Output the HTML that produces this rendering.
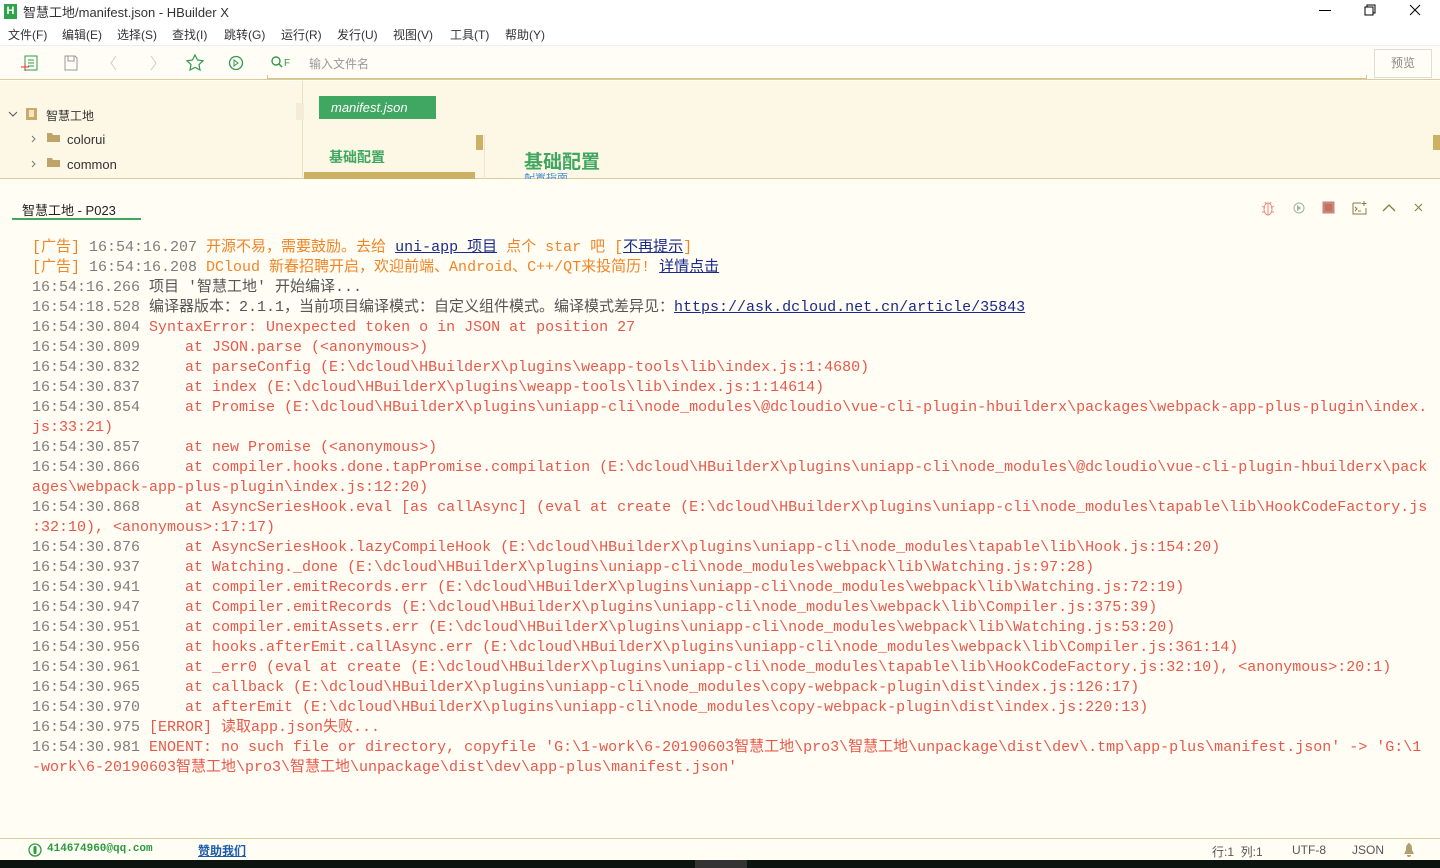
<!DOCTYPE html>
<html><head><meta charset="utf-8">
<style>
*{margin:0;padding:0;box-sizing:border-box}
body{width:1440px;height:868px;overflow:hidden;background:#fffdf4;font-family:"Liberation Sans","Noto Sans CJK SC",sans-serif;position:relative;color:#333}
.abs{position:absolute}
.title{top:0;left:0;width:1440px;height:24px;background:#fff;font-size:13px}
.menu{top:24px;left:0;width:1440px;height:22px;background:#fff;font-size:12px;border-bottom:1px solid #eee}
.menu span{position:absolute;top:2px}
.tool{top:46px;left:0;width:1440px;height:34px;background:#fffdf5;border-bottom:1px solid #dccb9a}
.panel{top:81px;left:0;width:1440px;height:98px;background:#fdf8e6;border-bottom:1px solid #d8cca0}
pre{font-family:"Liberation Mono","Noto Sans CJK SC",monospace;font-size:15px;line-height:20px;position:absolute;left:32px;top:238px;color:#e8584a;white-space:pre}
.t{color:#7d7d7d}.o{color:#f08528}.g{color:#555}.u{color:#1a2a8a;text-decoration:underline}
.status{top:838px;left:0;width:1440px;height:22px;border-top:1px solid #d8cca0;background:#fffdf4;font-size:12px}
.task{top:860px;left:0;width:1440px;height:8px;background:#0c1410}
</style></head><body>
<div class="abs title">
 <div class="abs" style="left:4px;top:4px;width:13px;height:15px;background:#2fa24a;color:#fff;font-size:11px;text-align:center;line-height:15px;font-weight:bold">H</div>
 <div class="abs" style="left:23px;top:2px">智慧工地/manifest.json - HBuilder X</div>
 <svg class="abs" style="left:1310px;top:0" width="130" height="24"><path d="M9 10.5h12" stroke="#000"/><path d="M55 7h8v8h-8z M57 7v-2h8v8h-2" fill="none" stroke="#000"/><path d="M100 5l10 10M110 5l-10 10" stroke="#000"/></svg>
</div>
<div class="abs menu">
 <span style="left:8px">文件(F)</span><span style="left:62px">编辑(E)</span><span style="left:117px">选择(S)</span><span style="left:172px">查找(I)</span><span style="left:224px">跳转(G)</span><span style="left:281px">运行(R)</span><span style="left:337px">发行(U)</span><span style="left:393px">视图(V)</span><span style="left:450px">工具(T)</span><span style="left:505px">帮助(Y)</span>
</div>
<div class="abs tool">
 <svg class="abs" style="left:0;top:0" width="300" height="34">
  <rect x="25" y="10" width="12" height="14" fill="none" stroke="#2f9a4e"/><path d="M28 14h6M28 17h6M28 20h6" stroke="#2f9a4e"/><path d="M21 21h8M25 17v8" stroke="#d33"/>
  <path d="M65 10h10l2 2v12h-12z M68 10v5h6v-5" fill="none" stroke="#999"/>
  <path d="M116 10l-5 7 5 7" fill="none" stroke="#ccc"/><path d="M151 10l5 7-5 7" fill="none" stroke="#ccc"/>
  <path d="M195 9l2.5 5 5.5 .8-4 3.8 1 5.4-5-2.6-5 2.6 1-5.4-4-3.8 5.5-.8z" fill="none" stroke="#2f9a4e" stroke-width="1.2"/>
  <circle cx="236" cy="17" r="6.5" fill="none" stroke="#2f9a4e" stroke-width="1.3"/><path d="M234 14v6l4-3z" fill="none" stroke="#2f9a4e"/>
  <circle cx="276" cy="15" r="4" fill="none" stroke="#2f9a4e" stroke-width="1.4"/><path d="M279 18l3 3" stroke="#2f9a4e" stroke-width="1.5"/>
 </svg>
 <div class="abs" style="left:284px;top:12px;font-size:10px;color:#2f9a4e">F</div>
 <div class="abs" style="left:309px;top:9px;font-size:12px;color:#999">输入文件名</div>
 <div class="abs" style="left:267px;top:29px;width:1100px;height:4px;border-left:1px solid #d6c28e;border-bottom:1px solid #d6c28e;border-right:1px solid #d6c28e"></div>
 <div class="abs" style="left:1374px;top:3px;width:58px;height:29px;border:1px solid #ddd;font-size:12px;color:#888;text-align:center;line-height:27px">预览</div>
</div>
<div class="abs panel">
 <div class="abs" style="left:0;top:0;width:303px;height:98px;border-right:1px solid #e9dfc0"></div>
 <svg class="abs" style="left:0;top:0" width="70" height="98"><path d="M9 31l4 4 4-4" fill="none" stroke="#555"/><rect x="26" y="27" width="11" height="12" fill="#c9aa6a"/><rect x="29" y="29" width="5" height="7" fill="#f3e6c4"/><path d="M32 55l3 3-3 3M32 80l3 3-3 3" fill="none" stroke="#777"/><path d="M47 52h5l1 2h7v7h-13z M47 77h5l1 2h7v7h-13z" fill="#bfa46a"/></svg>
 <div class="abs" style="left:46px;top:26px;font-size:12px">智慧工地</div>
 <div class="abs" style="left:67px;top:51px;font-size:13px">colorui</div>
 <div class="abs" style="left:67px;top:76px;font-size:13px">common</div>
 <div class="abs" style="left:296px;top:22px;width:8px;height:17px;background:#f3ecd6"></div>
 <div class="abs" style="left:319px;top:15px;width:117px;height:23px;background:#3fa761;color:#fff;font-style:italic;font-size:13px;padding:4px 0 0 12px">manifest.json</div>
 <div class="abs" style="left:329px;top:66px;font-size:14px;color:#3fa761;font-weight:bold">基础配置</div>
 <div class="abs" style="left:476px;top:54px;width:7px;height:15px;background:#ccb064"></div>
 <div class="abs" style="left:484px;top:54px;width:1px;height:44px;background:#efe5c8"></div>
 <div class="abs" style="left:304px;top:91px;width:171px;height:7px;background:#ccb064"></div>
 <div class="abs" style="left:524px;top:66px;font-size:19px;color:#3fa761;font-weight:bold">基础配置</div>
 <div class="abs" style="left:524px;top:92px;font-size:11px;color:#4a8fdc;height:6px;overflow:hidden;line-height:11px">配置指南</div>
 <div class="abs" style="left:1433px;top:54px;width:7px;height:15px;background:#ccb064"></div>
</div>
<div class="abs" style="left:22px;top:200px;font-size:13px;color:#222">智慧工地 - P023</div>
<div class="abs" style="left:12px;top:218px;width:129px;height:2px;background:#3fa761"></div>
<svg class="abs" style="left:1250px;top:196px" width="190" height="24">
 <ellipse cx="18" cy="13" rx="4" ry="6" fill="none" stroke="#e88a80"/><path d="M18 7v12M12 10l3 2M24 10l-3 2M12 16h3M21 16h3M15 6l1 2M21 6l-1 2" stroke="#e88a80"/>
 <circle cx="49" cy="12" r="5" fill="none" stroke="#9bb5a0"/><path d="M47 9v6l4-3z" fill="#9bb5a0"/>
 <rect x="73" y="6" width="11" height="11" fill="#c8867a" stroke="#c8867a"/><rect x="75" y="8" width="7" height="7" fill="#c57060"/>
 <path d="M103 7h8M103 7v11h13v-6" fill="none" stroke="#8a7a40"/><path d="M105 11l2 2-2 2M108 15h3M114 5v5M111.5 7.5h5" fill="none" stroke="#8a7a40"/>
 <path d="M133 15l6-6 6 6" fill="none" stroke="#8a7a40" stroke-width="1.3"/>
 <path d="M165 8l7 7M172 8l-7 7" stroke="#8a7a40"/>
</svg>
<pre><span class="o">[广告] </span><span class="t">16:54:16.207</span><span class="o"> 开源不易，需要鼓励。去给 </span><span class="u">uni-app 项目</span><span class="o"> 点个 star 吧 [</span><span class="u">不再提示</span><span class="o">]</span>
<span class="o">[广告] </span><span class="t">16:54:16.208</span><span class="o"> DCloud 新春招聘开启，欢迎前端、Android、C++/QT来投简历! </span><span class="u">详情点击</span>
<span class="t">16:54:16.266</span><span class="g"> 项目 '智慧工地' 开始编译...</span>
<span class="t">16:54:18.528</span><span class="g"> 编译器版本：2.1.1，当前项目编译模式：自定义组件模式。编译模式差异见：</span><span class="u">https://ask.dcloud.net.cn/article/35843</span>
<span class="t">16:54:30.804</span> SyntaxError: Unexpected token o in JSON at position 27
<span class="t">16:54:30.809</span>     at JSON.parse (&lt;anonymous&gt;)
<span class="t">16:54:30.832</span>     at parseConfig (E:\dcloud\HBuilderX\plugins\weapp-tools\lib\index.js:1:4680)
<span class="t">16:54:30.837</span>     at index (E:\dcloud\HBuilderX\plugins\weapp-tools\lib\index.js:1:14614)
<span class="t">16:54:30.854</span>     at Promise (E:\dcloud\HBuilderX\plugins\uniapp-cli\node_modules\@dcloudio\vue-cli-plugin-hbuilderx\packages\webpack-app-plus-plugin\index.
js:33:21)
<span class="t">16:54:30.857</span>     at new Promise (&lt;anonymous&gt;)
<span class="t">16:54:30.866</span>     at compiler.hooks.done.tapPromise.compilation (E:\dcloud\HBuilderX\plugins\uniapp-cli\node_modules\@dcloudio\vue-cli-plugin-hbuilderx\pack
ages\webpack-app-plus-plugin\index.js:12:20)
<span class="t">16:54:30.868</span>     at AsyncSeriesHook.eval [as callAsync] (eval at create (E:\dcloud\HBuilderX\plugins\uniapp-cli\node_modules\tapable\lib\HookCodeFactory.js
:32:10), &lt;anonymous&gt;:17:17)
<span class="t">16:54:30.876</span>     at AsyncSeriesHook.lazyCompileHook (E:\dcloud\HBuilderX\plugins\uniapp-cli\node_modules\tapable\lib\Hook.js:154:20)
<span class="t">16:54:30.937</span>     at Watching._done (E:\dcloud\HBuilderX\plugins\uniapp-cli\node_modules\webpack\lib\Watching.js:97:28)
<span class="t">16:54:30.941</span>     at compiler.emitRecords.err (E:\dcloud\HBuilderX\plugins\uniapp-cli\node_modules\webpack\lib\Watching.js:72:19)
<span class="t">16:54:30.947</span>     at Compiler.emitRecords (E:\dcloud\HBuilderX\plugins\uniapp-cli\node_modules\webpack\lib\Compiler.js:375:39)
<span class="t">16:54:30.951</span>     at compiler.emitAssets.err (E:\dcloud\HBuilderX\plugins\uniapp-cli\node_modules\webpack\lib\Watching.js:53:20)
<span class="t">16:54:30.956</span>     at hooks.afterEmit.callAsync.err (E:\dcloud\HBuilderX\plugins\uniapp-cli\node_modules\webpack\lib\Compiler.js:361:14)
<span class="t">16:54:30.961</span>     at _err0 (eval at create (E:\dcloud\HBuilderX\plugins\uniapp-cli\node_modules\tapable\lib\HookCodeFactory.js:32:10), &lt;anonymous&gt;:20:1)
<span class="t">16:54:30.965</span>     at callback (E:\dcloud\HBuilderX\plugins\uniapp-cli\node_modules\copy-webpack-plugin\dist\index.js:126:17)
<span class="t">16:54:30.970</span>     at afterEmit (E:\dcloud\HBuilderX\plugins\uniapp-cli\node_modules\copy-webpack-plugin\dist\index.js:220:13)
<span class="t">16:54:30.975</span> [ERROR] 读取app.json失败...
<span class="t">16:54:30.981</span> ENOENT: no such file or directory, copyfile 'G:\1-work\6-20190603智慧工地\pro3\智慧工地\unpackage\dist\dev\.tmp\app-plus\manifest.json' -> 'G:\1
-work\6-20190603智慧工地\pro3\智慧工地\unpackage\dist\dev\app-plus\manifest.json'</pre>
<div class="abs status">
 <svg class="abs" style="left:28px;top:4px" width="14" height="14"><circle cx="7" cy="7" r="6" fill="none" stroke="#2a9a40" stroke-width="1.3"/><rect x="5.5" y="3" width="3" height="8" rx="1.5" fill="#2a9a40"/></svg>
 <div class="abs" style="left:47px;top:4px;font-family:'Liberation Mono',monospace;font-size:11px;color:#2a9a40;font-weight:bold">414674960@qq.com</div>
 <div class="abs" style="left:198px;top:3px;color:#1a5aa8;text-decoration:underline;font-weight:bold">赞助我们</div>
 <div class="abs" style="left:1212px;top:4px;color:#555">行:1&nbsp;&nbsp;列:1</div>
 <div class="abs" style="left:1292px;top:4px;color:#555">UTF-8</div>
 <div class="abs" style="left:1352px;top:4px;color:#555">JSON</div>
 <svg class="abs" style="left:1402px;top:3px" width="14" height="16"><path d="M7 1c-1 0-1 1-1 1-2 1-2 3-2 6l-2 4h10l-2-4c0-3 0-5-2-6 0 0 0-1-1-1zM5 13a2 2 0 0 0 4 0" fill="#b0a070"/></svg>
</div>
<div class="abs task"><div class="abs" style="left:695px;top:0;width:52px;height:8px;background:#333"></div></div>
</body></html>
